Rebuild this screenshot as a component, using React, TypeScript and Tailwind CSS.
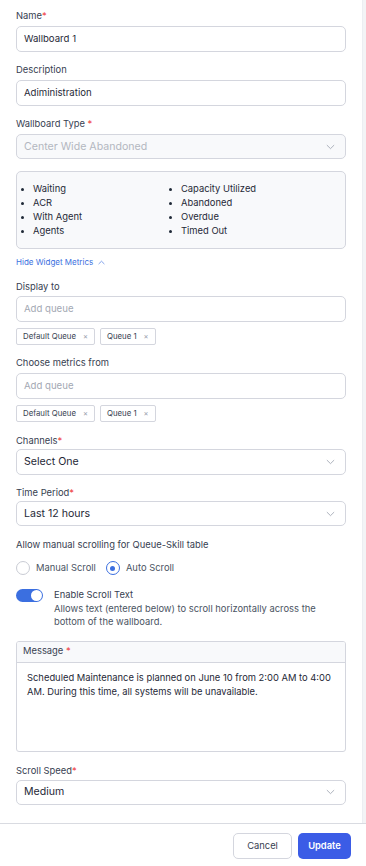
import React from 'react';

const Chevron: React.FC<{ className?: string }> = ({ className }) => (
  <svg viewBox="0 0 12 8" className={className} fill="none" stroke="currentColor" strokeWidth="1.1" strokeLinecap="round" strokeLinejoin="round">
    <path d="M1.5 1.8 6 6.2l4.5-4.4" />
  </svg>
);

const Label: React.FC<{ text: string; required?: boolean; spaced?: boolean; className?: string }> = ({ text, required, spaced, className }) => (
  <div className={`h-[14px] leading-[14px] text-[9.4px] text-[#374151] ${className ?? ''}`}>
    {text}
    {required && <span className="text-[#ef4444]">{spaced ? ' *' : '*'}</span>}
  </div>
);

const TextInput: React.FC<{ value?: string; placeholder?: string; className?: string }> = ({ value, placeholder, className }) => (
  <div className={`h-[26px] rounded-[5px] border border-[#d4d6de] bg-white px-[7px] flex items-center text-[9.6px] ${value ? 'text-[#1f2937]' : 'text-[#a3a8b3]'} ${className ?? ''}`}>
    {value ?? placeholder}
  </div>
);

const Select: React.FC<{ value: string; disabled?: boolean; className?: string }> = ({ value, disabled, className }) => (
  <div className={`h-[25px] rounded-[5px] border border-[#d4d6de] px-[7px] flex items-center justify-between text-[10.6px] ${disabled ? 'bg-[#f8f9fb] text-[#b3b7c0]' : 'bg-white text-[#1f2937]'} ${className ?? ''}`}>
    <span>{value}</span>
    <Chevron className="w-[9px] h-[6px] text-[#9ca3af] mr-[3px]" />
  </div>
);

const Chip: React.FC<{ label: string }> = ({ label }) => (
  <div className="h-[17px] rounded-[2px] border border-[#d4d6de] px-[6px] flex items-center gap-[7px] text-[7.8px] text-[#374151]">
    <span>{label}</span>
    <span className="text-[#9ca3af] text-[7.5px]">×</span>
  </div>
);

const Chips = () => (
  <div className="flex gap-[5px] mt-[6px]">
    <Chip label="Default Queue" />
    <Chip label="Queue 1" />
  </div>
);

const Bullet: React.FC<{ text: string }> = ({ text }) => (
  <li className="flex items-center h-[14px]">
    <span className="w-[3px] h-[3px] rounded-full bg-[#1f2937] ml-[4px] mr-[9px]" />
    <span>{text}</span>
  </li>
);

export default function App() {
  return (
    <div className="w-[366px] h-[866px] bg-white flex flex-col" style={{ fontFamily: 'Inter, "Noto Sans", sans-serif' }}>
      <div className="flex flex-1 min-h-0">
        <div className="flex-1 px-[16px] pt-[9px]">
          <Label text="Name" required />
          <TextInput value="Wallboard 1" className="mt-[3px]" />

          <Label text="Description" className="mt-[11px]" />
          <TextInput value="Adiministration" className="mt-[3px]" />

          <Label text="Wallboard Type" required spaced className="mt-[11px]" />
          <Select value="Center Wide Abandoned" disabled className="mt-[3px]" />

          <div className="mt-[12px] h-[78px] rounded-[5px] border border-[#d4d6de] bg-[#f8f9fb] pt-[10px] grid grid-cols-[148px_1fr] text-[9.4px] text-[#1f2937]">
            <ul>
              <Bullet text="Waiting" />
              <Bullet text="ACR" />
              <Bullet text="With Agent" />
              <Bullet text="Agents" />
            </ul>
            <ul>
              <Bullet text="Capacity Utilized" />
              <Bullet text="Abandoned" />
              <Bullet text="Overdue" />
              <Bullet text="Timed Out" />
            </ul>
          </div>

          <div className="mt-[6px] h-[14px] flex items-center gap-[5px] text-[8px] text-[#3b6fe0]">
            <span>Hide Widget Metrics</span>
            <Chevron className="w-[7px] h-[5px] rotate-180 text-[#3b6fe0]" />
          </div>

          <Label text="Display to" className="mt-[11px]" />
          <TextInput placeholder="Add queue" className="mt-[2px] h-[26px]" />
          <Chips />

          <Label text="Choose metrics from" className="mt-[11px]" />
          <TextInput placeholder="Add queue" className="mt-[3px] h-[25px]" />
          <Chips />

          <Label text="Channels" required className="mt-[12px]" />
          <Select value="Select One" className="mt-[1px] h-[26px]" />

          <Label text="Time Period" required className="mt-[11px]" />
          <Select value="Last 12 hours" className="mt-[1px]" />

          <Label text="Allow manual scrolling for Queue-Skill table" className="mt-[12px]" />

          <div className="mt-[9px] flex items-center h-[14px] text-[9.4px] text-[#4b5563]">
            <span className="w-[14px] h-[14px] rounded-full border border-[#c9ccd4] bg-white" />
            <span className="ml-[6px]">Manual Scroll</span>
            <span className="ml-[10px] w-[14px] h-[14px] rounded-full border-[1.5px] border-[#3b6fe0] flex items-center justify-center">
              <span className="w-[5px] h-[5px] rounded-full bg-[#3b6fe0]" />
            </span>
            <span className="ml-[6px]">Auto Scroll</span>
          </div>

          <div className="mt-[13px] flex items-start">
            <div className="w-[27px] h-[13px] rounded-full bg-[#3b6fe0] flex items-center justify-end pr-[1px] mt-[1px] shrink-0">
              <span className="w-[11px] h-[11px] rounded-full bg-white" />
            </div>
            <div className="ml-[11px] text-[9.4px] leading-[13.5px] text-[#4b5563]">
              <div className="text-[#374151]">Enable Scroll Text</div>
              <div>Allows text (entered below) to scroll horizontally across the bottom of the wallboard.</div>
            </div>
          </div>

          <div className="mt-[12px] h-[111px] rounded-[3px] border border-[#d4d6de] flex flex-col overflow-hidden">
            <div className="h-[21px] shrink-0 bg-[#f8f9fb] border-b border-[#d4d6de] px-[6px] flex items-center text-[9.4px] text-[#374151]">
              Message<span className="text-[#ef4444]">&nbsp;*</span>
            </div>
            <div className="flex-1 px-[10px] pt-[8px] text-[9.4px] leading-[14px] text-[#1f2937]">
              Scheduled Maintenance is planned on June 10 from 2:00 AM to 4:00 AM. During this time, all systems will be unavailable.
            </div>
          </div>

          <Label text="Scroll Speed" required className="mt-[12px]" />
          <Select value="Medium" className="mt-[2px] h-[25px]" />
        </div>
        <div className="w-[4px] bg-[#f3f4f6] border-l border-[#eceef2]" />
      </div>

      <div className="h-[43px] border-t border-[#d9dbe1] flex items-start justify-end gap-[6px] pr-[15px] pt-[9px]">
        <button className="h-[26px] w-[59px] rounded-[5px] border border-[#d4d6de] bg-white text-[9.4px] text-[#374151]">Cancel</button>
        <button className="h-[26px] w-[53px] rounded-[5px] bg-[#3b5ce6] text-[9.4px] font-semibold text-white">Update</button>
      </div>
    </div>
  );
}
